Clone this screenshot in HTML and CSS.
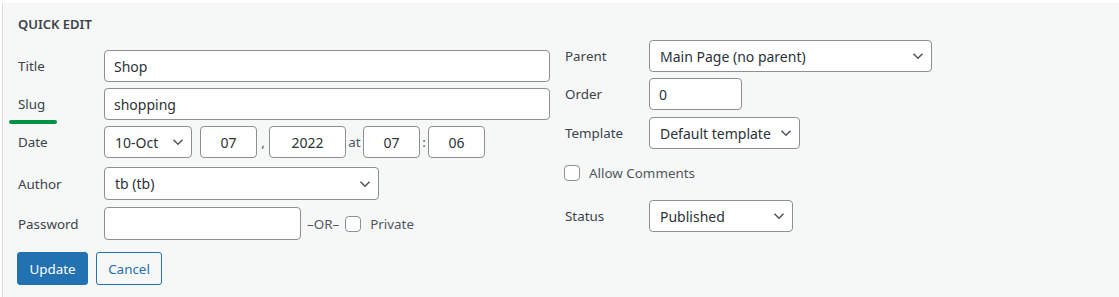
FILE: index.html
```html
<!DOCTYPE html>
<html lang="en">
<head>
    <meta charset="UTF-8">
    <meta name="viewport" content="width=device-width, initial-scale=1.0">
    <title>Quick Edit</title>
    <link rel="stylesheet" href="styles.css">
</head>
<body>

    <div class="quick-edit">
        <div class="columns">
            <div class="col-left">
                <h4 class="legend">Quick Edit</h4>

                <div class="row row-title">
                    <span class="label">Title</span>
                    <input type="text" class="field wide" value="Shop">
                </div>

                <div class="row row-slug">
                    <span class="label slug-label">Slug</span>
                    <input type="text" class="field wide" value="shopping">
                </div>

                <div class="row row-date">
                    <span class="label">Date</span>
                    <div class="timestamp">
                        <div class="select select-month">
                            <span>10-Oct</span>
                            <svg class="chevron" width="12" height="8" viewBox="0 0 12 8"><path d="M1.5 1.8 L6 6.2 L10.5 1.8" fill="none" stroke="#50575e" stroke-width="1.6"/></svg>
                        </div>
                        <input type="text" class="field num day" value="07">
                        <span class="sep">,</span>
                        <input type="text" class="field num year" value="2022">
                        <span class="sep at">at</span>
                        <input type="text" class="field num hour" value="07">
                        <span class="sep colon">:</span>
                        <input type="text" class="field num minute" value="06">
                    </div>
                </div>

                <div class="row row-author">
                    <span class="label">Author</span>
                    <div class="select select-author">
                        <span>tb (tb)</span>
                        <svg class="chevron" width="12" height="8" viewBox="0 0 12 8"><path d="M1.5 1.8 L6 6.2 L10.5 1.8" fill="none" stroke="#50575e" stroke-width="1.6"/></svg>
                    </div>
                </div>

                <div class="row row-password">
                    <span class="label">Password</span>
                    <input type="text" class="field password" value="">
                    <span class="or">&ndash;OR&ndash;</span>
                    <label class="check">
                        <span class="box"></span>
                        <span>Private</span>
                    </label>
                </div>
            </div>

            <div class="col-right">
                <div class="row row-parent">
                    <span class="label">Parent</span>
                    <div class="select select-parent">
                        <span>Main Page (no parent)</span>
                        <svg class="chevron" width="12" height="8" viewBox="0 0 12 8"><path d="M1.5 1.8 L6 6.2 L10.5 1.8" fill="none" stroke="#50575e" stroke-width="1.6"/></svg>
                    </div>
                </div>

                <div class="row row-order">
                    <span class="label">Order</span>
                    <input type="text" class="field order" value="0">
                </div>

                <div class="row row-template">
                    <span class="label">Template</span>
                    <div class="select select-template">
                        <span>Default template</span>
                        <svg class="chevron" width="12" height="8" viewBox="0 0 12 8"><path d="M1.5 1.8 L6 6.2 L10.5 1.8" fill="none" stroke="#50575e" stroke-width="1.6"/></svg>
                    </div>
                </div>

                <div class="row row-comments">
                    <label class="check">
                        <span class="box"></span>
                        <span>Allow Comments</span>
                    </label>
                </div>

                <div class="row row-status">
                    <span class="label">Status</span>
                    <div class="select select-status">
                        <span>Published</span>
                        <svg class="chevron" width="12" height="8" viewBox="0 0 12 8"><path d="M1.5 1.8 L6 6.2 L10.5 1.8" fill="none" stroke="#50575e" stroke-width="1.6"/></svg>
                    </div>
                </div>
            </div>
        </div>

        <div class="actions">
            <button type="button" class="btn btn-primary">Update</button>
            <button type="button" class="btn btn-secondary">Cancel</button>
        </div>
    </div>

</body>
</html>
```

FILE: styles.css
```css
body {
    margin: 0;
    background: #fff;
    font-family: "Noto Sans", "Open Sans", sans-serif;
    font-size: 13.4px;
    color: #3c434a;
}
.quick-edit {
    margin: 3px 0 0 2px;
    height: 294px;
    box-sizing: border-box;
    border-left: 1px solid #dcdcde;
    background: #f6f7f7;
    padding: 0 0 0 15px;
}
.columns {
    display: flex;
}
.col-left {
    width: 532px;
}
.col-right {
    margin-left: 15px;
    padding-top: 37px;
}
.legend {
    margin: 0;
    padding-top: 11px;
    height: 36px;
    box-sizing: border-box;
    font-size: 13px;
    font-weight: 600;
    text-transform: uppercase;
    color: #3c434a;
    line-height: 20px;
}
.row {
    display: flex;
    align-items: center;
}
.label {
    flex: 0 0 86px;
    line-height: 20px;
}
.col-right .label {
    flex-basis: 84px;
}
.row-slug, .row-date {
    margin-top: 6px;
}
.row-title {
    margin-top: 11px;
}
.row-author {
    margin-top: 9px;
}
.row-password {
    margin-top: 7px;
}
.row-order {
    margin-top: 6px;
}
.row-template {
    margin-top: 7px;
}
.row-comments {
    margin-top: 15px;
}
.row-status {
    margin-top: 18px;
}
.slug-label {
    position: relative;
}
.slug-label::after {
    content: "";
    position: absolute;
    left: -9px;
    top: 26px;
    width: 48px;
    height: 4px;
    border-radius: 2px;
    background: #009245;
}
.field, .select {
    height: 32px;
    box-sizing: border-box;
    border: 1px solid #8c8f94;
    border-radius: 4px;
    background: #fff;
    font-family: inherit;
    font-size: 14px;
    color: #2c3338;
    padding: 0 8px 0 9px;
    margin: 0;
}
.wide {
    width: 446px;
}
.select {
    display: flex;
    align-items: center;
    justify-content: space-between;
    padding-left: 10px;
    padding-right: 7px;
}
.chevron {
    flex: none;
}
.timestamp {
    display: flex;
    align-items: center;
}
.select-month {
    width: 88px;
    margin-right: 8px;
}
.num {
    text-align: center;
    padding: 0 4px;
}
.day, .hour, .minute {
    width: 57px;
}
.year {
    width: 77px;
}
.sep {
    width: 12px;
    text-align: center;
    color: #50575e;
}
.sep.at {
    width: 17px;
}
.sep.colon {
    width: 8px;
}
.select-author {
    width: 275px;
    height: 33px;
}
.password {
    width: 197px;
    height: 33px;
}
.or {
    margin: 0 6px 0 6px;
    color: #50575e;
}
.check {
    display: flex;
    align-items: center;
    color: #50575e;
}
.box {
    width: 16px;
    height: 16px;
    box-sizing: border-box;
    border: 1px solid #8c8f94;
    border-radius: 4px;
    background: #fff;
    margin-right: 9px;
}
.row-comments .check {
    margin-left: -1px;
}
.select-parent {
    width: 283px;
}
.order {
    width: 93px;
}
.select-template {
    width: 151px;
}
.select-status {
    width: 144px;
}
.actions {
    display: flex;
    margin-top: 12px;
    margin-left: -1px;
}
.btn {
    height: 33px;
    font-family: inherit;
    font-size: 13.4px;
    border-radius: 3px;
    padding: 0 10px;
    cursor: pointer;
}
.btn-primary {
    background: #2271b1;
    border: 1px solid #2271b1;
    color: #fff;
    width: 71px;
}
.btn-secondary {
    background: #f6f7f7;
    border: 1px solid #2271b1;
    color: #2271b1;
    margin-left: 8px;
    width: 66px;
}
```
